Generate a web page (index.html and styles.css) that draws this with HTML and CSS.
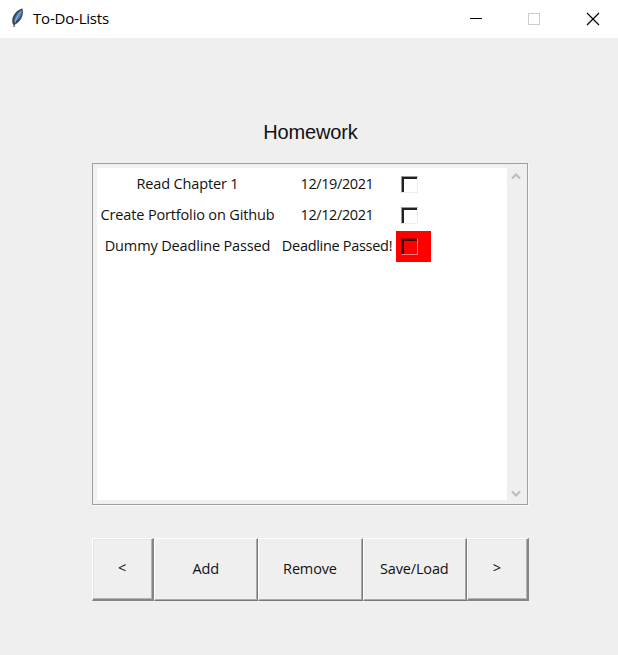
FILE: index.html
```html
<!DOCTYPE html>
<html lang="en">
<head>
<meta charset="utf-8">
<title>To-Do-Lists</title>
<link rel="stylesheet" href="styles.css">
</head>
<body>
<header class="titlebar">
  <svg class="feather" width="14" height="20" viewBox="0 0 14 20">
    <path d="M11.500 .5C7 1.500 2.500 5.500 1.300 11c-.3 2.500 0 4.500 1.200 6C8.500 15.500 13.500 8 11.500.5z" fill="#3c4654"/>
    <path d="M10.800 2C7 4 3.500 8 3 14.300 8 12 11.700 7 10.800 2z" fill="#4a82c4"/>
    <path d="M10 3.500C7 7 4.500 11 3.300 17" fill="none" stroke="#a9c4e2" stroke-width=".8"/>
    <path d="M3.500 14.500L3 19" stroke="#333" stroke-width="1.100"/>
  </svg>
  <span class="title">To-Do-Lists</span>
  <div class="controls">
    <svg width="58" height="38" viewBox="0 0 58 38"><path d="M20 18.500h12" stroke="#000"/></svg>
    <svg width="58" height="38" viewBox="0 0 58 38"><rect x="20.500" y="13.500" width="11" height="11" fill="none" stroke="#ccc"/></svg>
    <svg width="58" height="38" viewBox="0 0 58 38"><path d="M21 13l12 12M33 13L21 25" stroke="#000" stroke-width="1.150"/></svg>
  </div>
</header>
<main>
  <h1>Homework</h1>
  <section class="panel">
    <div class="list">
      <div class="row"><span class="task">Read Chapter 1</span><span class="date">12/19/2021</span><span class="cell"><i class="check"></i></span></div>
      <div class="row"><span class="task">Create Portfolio on Github</span><span class="date">12/12/2021</span><span class="cell"><i class="check"></i></span></div>
      <div class="row"><span class="task">Dummy Deadline Passed</span><span class="status">Deadline Passed!</span><span class="cell late"><i class="check"></i></span></div>
    </div>
    <div class="scrollbar">
      <svg width="10" height="8" viewBox="0 0 10 8"><path d="M1 6.500L5 2.500 9 6.500" fill="none" stroke="#bdbdbd" stroke-width="2.200"/></svg>
      <svg width="10" height="8" viewBox="0 0 10 8"><path d="M1 1.500L5 5.500 9 1.500" fill="none" stroke="#bdbdbd" stroke-width="2.200"/></svg>
    </div>
  </section>
  <nav class="buttons">
    <button class="arrow">&lt;</button>
    <button>Add</button>
    <button>Remove</button>
    <button>Save/Load</button>
    <button class="arrow">&gt;</button>
  </nav>
</main>
</body>
</html>
```
FILE: styles.css
```css
* { box-sizing: border-box; }
body {
  margin: 0;
  height: 655px;
  overflow: hidden;
  background: #efefef;
  color: #111;
  font: 14.5px/20px "Open Sans", "Noto Sans", sans-serif;
  letter-spacing: -.15px;
}
.titlebar {
  display: flex;
  align-items: center;
  height: 38px;
  padding-left: 11px;
  background: #fff;
}
.feather { margin-top: -2px; }
.title { margin: -2px 0 0 8px; font-size: 15px; letter-spacing: -.2px; color: #000; }
.controls { display: flex; margin-left: auto; margin-right: -6px; }
main { padding: 82px 89px 0 92px; }
h1 {
  margin: 0 0 19px;
  font: 20px/24px "Liberation Sans", sans-serif;
  letter-spacing: -.15px;
  text-align: center;
}
.panel {
  display: flex;
  width: 436px;
  height: 342px;
  border: 1px solid #a0a0a0;
  box-shadow: 1px 1px 0 #fafafa;
}
.list {
  width: 414px;
  margin: 1px 0;
  padding: 1px 0 0;
  background: #fff;
  border: solid #f1f1f1;
  border-width: 3px 0 3px 4px;
}
.row {
  display: grid;
  grid-template-columns: 181px 118px 35px;
  height: 31px;
  line-height: 30px;
  text-align: center;
}
.date { letter-spacing: -.4px; }
.status { letter-spacing: -.3px; }
.cell { display: flex; align-items: center; padding-left: 5px; }
.late { background: #f00; }
.check {
  width: 17px;
  height: 17px;
  border: 1px solid;
  border-color: #999 #eee #eee #999;
  box-shadow: inset 2px 2px 0 #202020;
}
.late .check { border-color: #a00 #ff7777 #ff7777 #a00; box-shadow: inset 2px 2px 0 #350000; }
.scrollbar {
  display: flex;
  flex: 1;
  flex-direction: column;
  justify-content: space-between;
  align-items: center;
  padding: 8px 2px 6px 0;
}
.buttons { display: flex; height: 63px; margin-top: 33px; }
button {
  width: 104.300px;
  padding: 0 1px 2px 0;
  background: #efefef;
  border: solid;
  border-width: 1px 1px 1px 1px;
  border-color: #fff #777 #777 #fff;
  box-shadow: inset -1px -1px 0 #aaa;
  color: inherit;
  font: inherit;
  letter-spacing: inherit;
}
.arrow {
  width: 62px;
  border-right-width: 2px;
  border-bottom-width: 2px;
  border-color: #fff #858585 #858585 #fff;
  box-shadow: inset -1px -1px 0 #b5b5b5, inset 1px 1px 0 #e6e6e6;
}
```
